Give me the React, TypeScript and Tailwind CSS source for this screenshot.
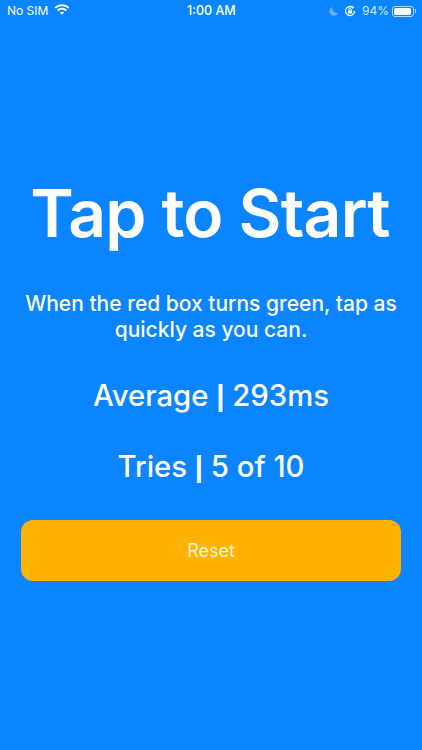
export default function App() {
  return (
    <div className="w-[422px] h-[750px] bg-[#0a84ff] text-white flex flex-col overflow-hidden font-['Inter','Liberation_Sans',sans-serif]">
      <div className="relative h-[22px] flex items-center justify-between pl-[7px] pr-[6px] text-[12px] leading-none">
        <div className="flex items-center gap-[6px]">
          <span>No SIM</span>
          <svg width="16" height="11" viewBox="0 0 17 12" fill="none" stroke="white" strokeWidth="2.1" className="mb-[3px]">
            <path d="M1 4.2C5.3 0.4 11.7 0.4 16 4.2" />
            <path d="M3.7 7C6.5 4.6 10.5 4.6 13.3 7" />
            <path d="M8.5 11.5L6 9.2C7.4 8.2 9.6 8.2 11 9.2Z" fill="white" stroke="none" />
          </svg>
        </div>
        <span className="absolute left-[187px] top-[5px] text-[12.5px] font-medium">1:00 AM</span>
        <div className="flex items-center">
          <svg width="11" height="11" viewBox="0 0 12 12" className="mr-[5px]">
            <path d="M5 1A5 5 0 1 0 11 8A5.5 5.5 0 0 1 5 1Z" fill="#6cb2fb" />
          </svg>
          <svg width="12" height="12" viewBox="0 0 13 13" className="mr-[6px]" fill="none">
            <path d="M11.4 6.5A4.9 4.9 0 1 1 9.8 2.9" stroke="white" strokeWidth="1.4" />
            <path d="M9 0.8L11.4 3L8.6 4Z" fill="white" />
            <rect x="4.2" y="5.6" width="4.6" height="3.6" rx="0.5" fill="white" />
            <path d="M5.2 5.6V4.8A1.3 1.3 0 0 1 7.8 4.8V5.6" stroke="white" strokeWidth="0.9" />
          </svg>
          <span className="mr-[3px] text-[#d5e9ff]">94%</span>
          <div className="w-[22px] h-[11px] border border-white/70 rounded-[3px] p-[1px]">
            <div className="w-[17px] h-full bg-white rounded-[1.5px]" />
          </div>
          <div className="w-[1px] h-[4px] bg-white/70 ml-[1px]" />
        </div>
      </div>
      <h1 className="mt-[151px] pr-[2px] text-center text-[66px] leading-[80px] font-semibold tracking-[-0.8px]">Tap to Start</h1>
      <p className="mt-[38px] px-[20px] text-center text-[21px] leading-[26px] font-[550]">
        When the red box turns green, tap as quickly as you can.
      </p>
      <p className="mt-[35px] h-[36px] text-center text-[29.3px] leading-[36px] font-medium">Average <span className="font-['Liberation_Sans'] font-bold leading-none">|</span> 293ms</p>
      <p className="mt-[35px] h-[36px] text-center text-[29.3px] leading-[36px] font-medium">Tries <span className="font-['Liberation_Sans'] font-bold leading-none">|</span> 5 of 10</p>
      <button className="mt-[35px] mx-[21px] h-[61px] rounded-[12px] bg-[#ffb300] text-[#fff6d8] text-[18px]">Reset</button>
    </div>
  );
}
